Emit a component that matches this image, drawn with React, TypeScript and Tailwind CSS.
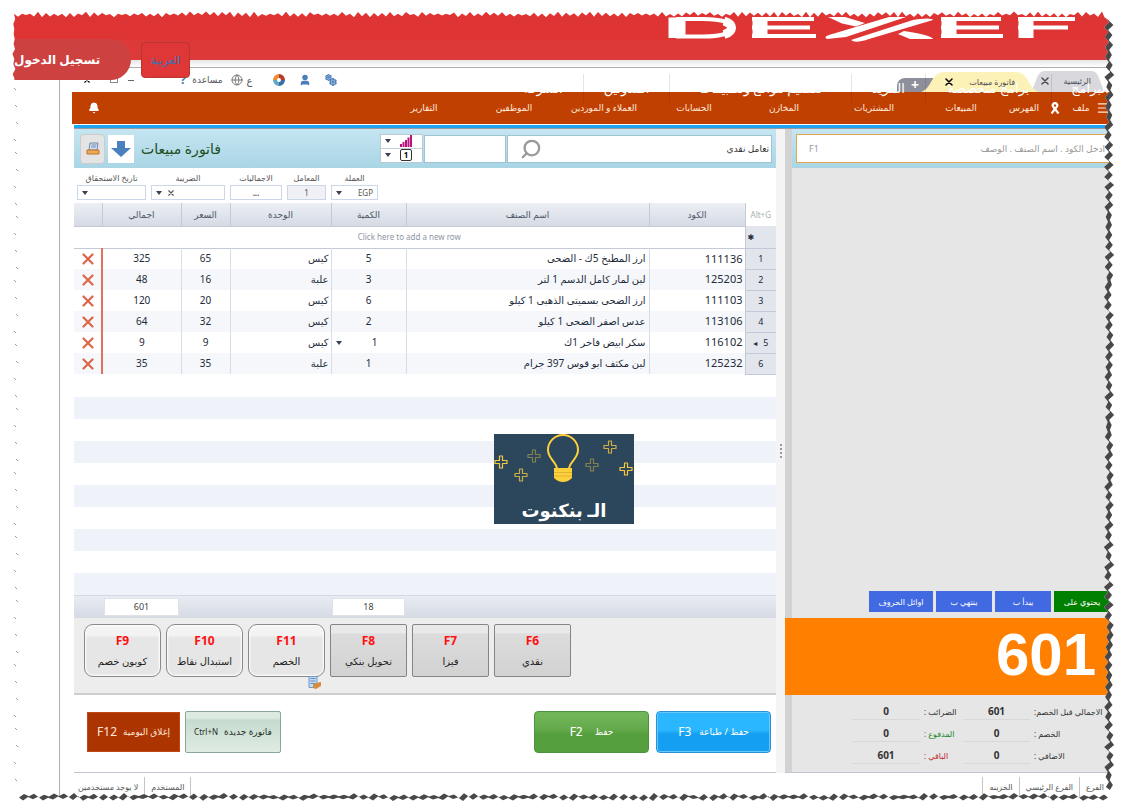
import React from "react";
import { Bell, Menu, Search, Globe, User, Settings } from "lucide-react";

const menu = [
  { label: "المشتريات" },
  { label: "المخازن" },
  { label: "الحسابات" },
  { label: "العملاء و الموردين" },
  { label: "الموظفين" },
  { label: "التقارير" },
];

const items = [
  { code: "111136", name: "ارز المطبخ 5ك - الضحى", qty: 5, unit: "كيس", price: 65, total: 325 },
  { code: "125203", name: "لبن لمار كامل الدسم 1 لتر", qty: 3, unit: "علبة", price: 16, total: 48 },
  { code: "111103", name: "ارز الضحى بسميتى الذهبى 1 كيلو", qty: 6, unit: "كيس", price: 20, total: 120 },
  { code: "113106", name: "عدس اصفر الضحى 1 كيلو", qty: 2, unit: "كيس", price: 32, total: 64 },
  { code: "116102", name: "سكر ابيض فاخر 1ك", qty: 1, unit: "كيس", price: 9, total: 9 },
  { code: "125232", name: "لبن مكثف ابو قوس 397 جرام", qty: 1, unit: "علبة", price: 35, total: 35 },
];

function Caret() {
  return (
    <svg className="h-1 w-1.5 shrink-0" viewBox="0 0 6 4" aria-hidden="true">
      <path d="M0 0h6L3 4z" fill="#374151" />
    </svg>
  );
}

function Cross({ className }: { className: string }) {
  return (
    <svg className={className} viewBox="0 0 12 12" aria-hidden="true">
      <path d="M1.5 1.5l9 9M10.5 1.5l-9 9" stroke="currentColor" strokeWidth="2.2" strokeLinecap="round" />
    </svg>
  );
}

function BrandLogo() {
  return (
    <svg className="h-7 w-[408px]" viewBox="0 0 408 28" role="img" aria-label="DEXEF">
      <g fill="none" stroke="#fff">
        <path d="M10 3.500v20.500" strokeWidth="17" />
        <path d="M9 5H36C76 5 76 22.500 36 22.500H9" strokeWidth="4" />
        <path d="M57 7C67 10 67 17.500 57 20.500" strokeWidth="9" />
        <path d="M93 3v21M282 3v21M359 3v21" strokeWidth="15" />
        <path d="M85 5h62M85 13.500h58M85 22h64" strokeWidth="4" />
        <path d="M274 5h60M274 13.500h58M274 22h62" strokeWidth="4" />
        <path d="M351 5h57M351 13.500h50" strokeWidth="4" />
      </g>
      <g fill="#fff">
        <path d="M161 3h17l20 6-9 3.500-14-3z" />
        <path d="M222 3h17l-60 20-19 2q-4-2 2-4z" />
        <path d="M246 6q18-3 20 0l-64 19q-14 5-18 1z" />
        <path d="M237 17l-6 3 12 5h23q-2-4-29-8z" />
      </g>
    </svg>
  );
}

function Plus({ x, y, o }: { x: number; y: number; o: number }) {
  return (
    <path
      transform={`translate(${x} ${y})`}
      opacity={o}
      d="M-1.500-6h3v4.500h4.500v3h-4.500v4.500h-3v-4.500h-4.500v-3h4.500z"
      fill="none"
      stroke="#f5c842"
      strokeWidth="1.200"
      strokeLinejoin="round"
    />
  );
}

function Promo() {
  return (
    <a href="#banknote" className="absolute top-[59px] left-[420px] flex h-[90px] w-[140px] items-end justify-center bg-[#2c465c]">
      <svg className="absolute inset-0 h-full w-full" viewBox="0 0 140 90" aria-hidden="true">
        <path d="M63 35c0-7-9-10-9-19a15 15 0 0 1 30 0c0 9-9 12-9 19z" fill="none" stroke="#fdd03b" strokeWidth="2" />
        <path d="M60 34h18v10q-4 4-9 4t-9-4z" fill="#fdd03b" />
        <path d="M60 38.500h18M60 42h18" stroke="#d9a92d" strokeWidth=".8" />
        <Plus x={7} y={28} o={1} />
        <Plus x={27} y={41} o={0.8} />
        <Plus x={40} y={22} o={0.45} />
        <Plus x={98} y={31} o={0.45} />
        <Plus x={116} y={13} o={0.8} />
        <Plus x={132} y={35} o={1} />
      </svg>
      <span className="relative text-[18px] leading-7 font-bold text-white">الـ بنكنوت</span>
    </a>
  );
}

type Pt = [number, number];

function edge(count: number, seed: number, at: (i: number, jitter: number) => Pt): Pt[] {
  let s = seed;
  const out: Pt[] = [];
  for (let i = 0; i < count; i++) {
    s = (s * 16807) % 2147483647;
    const r = (s % 1000) / 1000;
    out.push(at(i, (i % 2 ? 1 : -1) * (0.6 + r * 3)));
  }
  return out;
}

const topEdge = edge(273, 77, (i, j) => [14 + i * 4, 14.5 + j * 0.8]);
const rightEdge = edge(155, 913, (i, j) => [1107 + j * 0.9, 17 + i * 5]);
const bottomEdge = edge(218, 4211, (i, j) => [1104 - i * 5, 795.5 + j * 0.7]);
const leftEdge = edge(156, 31, (i, j) => [14 + j * 0.5, 794 - i * 5]);

const line = (p: Pt[]) => p.map(([x, y]) => `${x.toFixed(1)} ${y.toFixed(1)}`).join("L");
const band = (p: Pt[], dx: number, dy: number) =>
  `M${line(p)}L${line([...p].reverse().map(([x, y]) => [x + dx, y + dy] as Pt))}Z`;

function TornFrame() {
  const inner = line([...topEdge, ...rightEdge, ...bottomEdge, ...leftEdge]);
  return (
    <svg
      className="pointer-events-none absolute inset-0 z-30 h-full w-full"
      viewBox="0 0 1123 810"
      preserveAspectRatio="none"
      aria-hidden="true"
    >
      <path d={`M-2-2H1125V812H-2ZM${inner}Z`} fill="#fff" fillRule="evenodd" />
      <path d={band(rightEdge, 4, 3)} fill="#484848" />
      <path d={band(bottomEdge, 4, 3)} fill="#484848" />
      {Array.from({ length: 44 }, (_, i) => (
        <path key={i} d={`M${14 + (i % 3)} ${88 + i * 16 + (i % 4)}l2 2`} stroke="#999" strokeWidth="1" />
      ))}
    </svg>
  );
}

function SiteHeader() {
  return (
    <header className="relative h-[60px] bg-[#df3434]">
      <div className="absolute inset-x-0 bottom-0 h-5 bg-[#dd3939]" />
      <div className="relative flex justify-start pt-3.5 pr-12">
        <BrandLogo />
      </div>
      <button className="absolute top-[42px] left-[141px] z-20 h-9 w-[49px] rounded border border-[#bb3434] bg-[#df3737] text-[11px] text-[#3175b8]">
        العربية
      </button>
      <a
        href="#login"
        className="absolute top-[39px] left-0 z-20 flex h-[41px] w-[131px] items-center justify-end rounded-r-full bg-[#cd4141] pl-3.5 text-[12px] font-semibold whitespace-nowrap text-white"
      >
        تسجيل الدخول
      </a>
      <nav className="absolute top-[74px] right-[13px] z-10 flex h-[29px] text-[13px] leading-[29px] whitespace-nowrap text-white [&>a]:border-l [&>a]:border-black/10 [&>a]:text-center">
        <a href="#programs" className="w-[59px] pl-[18px]">البرامج</a>
        <a href="#special" className="w-[126px]">برامج متخصصة</a>
        <a href="#more" className="w-[74px]">المزيد</a>
        <a href="#design" className="w-[182px]">تصميم مواقع وتطبيقات</a>
        <a href="#blog" className="w-[86px]">المدونين</a>
        <a href="#about" className="w-20 border-none!">الشركة</a>
      </nav>
    </header>
  );
}

function TabShape({ fill }: { fill: string }) {
  return (
    <svg className="absolute inset-0 h-full w-full" viewBox="0 0 100 22" preserveAspectRatio="none" aria-hidden="true">
      <path d="M0 22C10 18 8 1 20 1H80C92 1 90 18 100 22Z" fill={fill} />
    </svg>
  );
}

function TitleBar() {
  return (
    <div className="flex h-6 items-center justify-between pl-3 text-[8px]">
      <div className="flex h-full items-end pr-[3px] text-[#4b4b55]">
        <button className="relative flex h-[22px] w-[78px] items-center justify-between pr-4 pl-3">
          <TabShape fill="#d8d8dd" />
          <span className="relative">الرئيسية</span>
          <Cross className="relative h-2 w-2" />
        </button>
        <button className="relative -mr-2.5 flex h-[21px] w-[118px] items-center justify-between pr-6 pl-6">
          <TabShape fill="#fcf2b8" />
          <span className="relative">فاتورة مبيعات</span>
          <Cross className="relative h-2 w-2 text-black" />
        </button>
        <button aria-label="تبويب جديد" className="-mr-3 flex h-3.5 w-9 items-center justify-center rounded-tl-lg bg-[#8d8f9b] text-[14px] leading-none font-bold text-white">
          +
        </button>
      </div>
      <div className="flex items-center text-[#555]">
        <span className="relative ml-3.5 h-3 w-3 text-[#4a7ebb]">
          <Settings className="absolute top-0 left-0 h-[7px] w-[7px]" strokeWidth={4} />
          <Settings className="absolute right-0 bottom-0 h-2 w-2" strokeWidth={4} />
        </span>
        <User className="ml-3.5 h-3 w-3 fill-[#4a7ebb] text-[#4a7ebb]" strokeWidth={3} />
        <svg className="ml-5 h-3 w-3" viewBox="0 0 12 12" fill="none" strokeWidth="4" aria-hidden="true">
          <path d="M6 2a4 4 0 0 1 4 4" stroke="#b83a2e" />
          <path d="M10 6a4 4 0 0 1-4 4" stroke="#3d6da8" />
          <path d="M6 10a4 4 0 0 1-4-4" stroke="#5fa8c9" />
          <path d="M2 6a4 4 0 0 1 4-4" stroke="#e98e35" />
        </svg>
        <span className="ml-1 text-[10px]">ع</span>
        <Globe className="ml-2 h-3 w-3 text-[#777]" />
        <span className="ml-1.5 text-[9px]">مساعدة</span>
        <span dir="ltr" className="ml-[46px] text-[13px] font-bold text-[#4a7ebb]">?</span>
        <span className="ml-2.5 h-px w-1.5 bg-[#666]" />
        <span className="ml-5 h-1.5 w-2 border border-[#888]" />
        <Cross className="ml-3 h-1.5 w-1.5 text-black" />
      </div>
    </div>
  );
}

function MenuBar() {
  return (
    <div className="ml-3 flex h-8 items-center bg-[#bf4000] text-[9px] text-[#ffe9dc]">
      <button aria-label="القائمة" className="ml-px">
        <Menu className="h-4 w-3.5" />
      </button>
      <button className="w-7">ملف</button>
      <svg className="mr-1.5 ml-1 h-3 w-3 shrink-0" viewBox="0 0 12 12" fill="none" stroke="#fff" strokeWidth="2.200" aria-hidden="true">
        <path d="M2.500 11.500L8 4.500C9 2.500 7.500 1.200 6 1.200S3 2.500 4 4.500l5.500 7" />
      </svg>
      <button className="w-[42px]">الفهرس</button>
      <button className="w-[84px]">المبيعات</button>
      {menu.map((m) => (
        <button key={m.label} className="w-[90px] whitespace-nowrap">
          {m.label}
        </button>
      ))}
      <button aria-label="تنبيهات" className="mr-auto ml-4">
        <Bell className="h-3 w-3 fill-white text-white" />
      </button>
    </div>
  );
}

function InvoiceHeader() {
  return (
    <div className="flex h-[39px] items-center gap-px bg-linear-to-b from-[#c5e5f1] to-[#a9d5e5] pr-1 pl-1.5">
      <div className="flex h-7 min-w-0 flex-1 items-center border border-[#9fc3d3] bg-white pr-0.5 pl-3">
        <input aria-label="العميل" defaultValue="تعامل نقدي" className="w-full min-w-0 bg-transparent text-[9px] text-[#333] outline-none" />
        <Search className="h-6 w-6 -scale-x-100 text-[#999]" strokeWidth={2.5} />
      </div>
      <input aria-label="رقم المستند" className="h-7 w-[82px] border border-[#9fc3d3] bg-white" />
      <div className="flex h-[29px] w-[43px] flex-col border border-[#b9c9d6] bg-white">
        <button aria-label="مستوى السعر" className="flex h-3.5 items-center justify-between border-b border-[#c5cfdc] pr-2.5 pl-1">
          <svg className="h-3 w-3" viewBox="0 0 12 12" aria-hidden="true">
            <path d="M0 9h2v3H0zM2.500 7h2v5h-2zM5 5h2v7H5zM7.500 2.500h2V12h-2zM10 0h2v12h-2z" fill="#b8137f" />
          </svg>
          <Caret />
        </button>
        <button className="flex h-3.5 items-center justify-between pr-2.5 pl-1">
          <span className="flex h-3 w-3 items-center justify-center rounded-xs border border-[#333] text-[8px] leading-none font-bold">1</span>
          <Caret />
        </button>
      </div>
      <h1 className="mr-auto ml-1.5 w-[238px] text-left text-[14px] font-medium whitespace-nowrap text-[#1d4d20]">فاتورة مبيعات</h1>
      <button aria-label="تنزيل" className="ml-0.5 flex h-7 w-[26px] items-center justify-center bg-white">
        <svg className="h-4 w-5" viewBox="0 0 20 16" aria-hidden="true">
          <path d="M6 0h8v7h6L10 16 0 7h6z" fill="#4a80bf" />
        </svg>
      </button>
      <button aria-label="طباعة" className="flex h-[30px] w-[25px] items-center justify-center rounded-sm border border-[#ccc] bg-[#e4e4e4]">
        <svg className="h-3.5 w-3.5" viewBox="0 0 14 14" aria-hidden="true">
          <path d="M4 1h8l-1 7H3z" fill="#d7e4f4" stroke="#6d87ab" />
          <path d="M5.500 3h5M5 5h5" stroke="#6d87ab" />
          <path d="M1 8h12v4H1z" fill="#eda955" stroke="#b9762b" />
        </svg>
      </button>
    </div>
  );
}

function Filters() {
  const box = "flex h-[15px] items-center border border-[#ccd6ea] bg-white px-1";
  return (
    <div className="flex h-[35px] justify-end gap-[5px] pt-[3px] pl-[3px] text-center text-[8px] leading-[14px] whitespace-nowrap text-[#555]">
      <label className="w-[47px]">
        العملة
        <span className={box + " justify-between"}>
          <span>EGP</span>
          <Caret />
        </span>
      </label>
      <label className="w-[39px]">
        المعامل
        <input defaultValue="1" className="block h-[15px] w-full border border-[#ccd6ea] bg-[#f0f1f4] text-center" />
      </label>
      <label className="w-[52px]">
        الاجماليات
        <button className="block h-[15px] w-full border border-[#ccd6ea] bg-white leading-none font-bold">...</button>
      </label>
      <label className="w-[74px]">
        الضريبة
        <span className={box + " justify-end gap-1.5"}>
          <Cross className="h-1.5 w-1.5" />
          <Caret />
        </span>
      </label>
      <label className="w-[69px]">
        تاريخ الاستحقاق
        <span className={box + " justify-end"}>
          <Caret />
        </span>
      </label>
    </div>
  );
}

function ItemsTable() {
  return (
    <table className="w-full table-fixed border-collapse text-[10px] text-[#222b3a]">
      <colgroup>
        <col className="w-[31px]" />
        <col className="w-24" />
        <col />
        <col className="w-[75px]" />
        <col className="w-[101px]" />
        <col className="w-[49px]" />
        <col className="w-[79px]" />
        <col className="w-7" />
      </colgroup>
      <thead>
        <tr className="h-[23px] text-[9px] text-[#4f5868] [&>th]:border-r [&>th]:border-b [&>th]:border-[#c3c9d8] [&>th]:bg-linear-to-b [&>th]:from-[#eceff4] [&>th]:to-[#d5dae4] [&>th]:font-normal">
          <td dir="ltr" className="text-center text-[8px] text-[#a9b0a8]">Alt+G</td>
          <th>الكود</th>
          <th>اسم الصنف</th>
          <th>الكمية</th>
          <th>الوحدة</th>
          <th>السعر</th>
          <th>اجمالي</th>
          <th aria-label="حذف" />
        </tr>
      </thead>
      <tbody>
        <tr className="h-[22px] border-b border-[#c3c9d8]">
          <td className="border-l border-[#c3c9d8] bg-[#e2e5ec] pl-0.5 text-left text-[8px]">✱</td>
          <td colSpan={7} dir="ltr" className="text-center text-[8px] text-[#8f96a3]">
            Click here to add a new row
          </td>
        </tr>
        {items.map((r, i) => (
          <tr key={r.code} className="h-[21px] even:bg-white odd:bg-[#f5f7fa] [&>td]:p-0">
            <td className="border-b border-l border-[#c3c9d8] bg-[#e2e5ec] text-center text-[9px]">
              {i + 1}
              {i === 4 && <span className="mr-1.5 inline-block text-[8px]">◂</span>}
            </td>
            <td className="border-l border-[#d9dce8] text-[11px]">
              <span className="block pr-0.5 text-right">{r.code}</span>
            </td>
            <td className="border-l border-[#d9dce8] whitespace-nowrap">
              <span className="block pr-[3px]">{r.name}</span>
            </td>
            <td className="border-l border-[#d9dce8] text-center">
              {i === 4 ? (
                <span className="flex items-center justify-between pr-7 pl-1">
                  {r.qty}
                  <Caret />
                </span>
              ) : (
                r.qty
              )}
            </td>
            <td className="border-l border-[#d9dce8]">
              <span className="block pr-0.5">{r.unit}</span>
            </td>
            <td className="border-l border-[#d9dce8] text-center">{r.price}</td>
            <td className="border-l-2 border-l-[#e5705a] text-center">{r.total}</td>
            <td className="text-center">
              <button aria-label="حذف الصف" className="block w-full text-[#dd6549]">
                <Cross className="mx-auto h-3 w-3" />
              </button>
            </td>
          </tr>
        ))}
      </tbody>
    </table>
  );
}

const pay = [
  { key: "F6", label: "نقدي", round: false },
  { key: "F7", label: "فيزا", round: false },
  { key: "F8", label: "تحويل بنكي", round: false },
  { key: "F11", label: "الخصم", round: true },
  { key: "F10", label: "استبدال نقاط", round: true },
  { key: "F9", label: "كوبون خصم", round: true },
];

function PaymentPanel() {
  return (
    <div className="flex h-[77px] justify-end gap-[5px] border-b-2 border-[#cfcfcf] bg-[#ededed] pt-1.5 pl-2.5">
      {pay.map((p) => (
        <div key={p.key} className="relative">
          <button
            className={
              "flex h-[53px] w-[77px] flex-col items-center justify-center gap-1 border text-[10px] leading-4 whitespace-nowrap text-[#222] " +
              (p.round
                ? "rounded-[9px] border-[#8a8a8a] bg-linear-to-b from-[#f3f3f3] from-20% to-[#e6e6e6] to-25% shadow-[inset_0_0_2px_1px_#fff]"
                : "rounded-xs border-[#858585] bg-linear-to-b from-[#e9e9e9] from-15% via-[#dcdcdc] via-18% to-[#d2d2d2]")
            }
          >
            <span className="text-[12px] font-bold text-[#ff1010]">{p.key}</span>
            <span>{p.label}</span>
          </button>
          {p.key === "F11" && (
            <svg className="absolute right-1 bottom-1 h-[13px] w-[13px]" viewBox="0 0 13 13" aria-hidden="true">
              <path d="M1 .5h8v11H1z" fill="#c5dbf4" stroke="#6d9ace" />
              <path d="M2.500 2.500h5M2.500 5h5M2.500 7.500h5" stroke="#5f8cc4" />
              <path d="M5 8.500l3-1.500 5-1v4l-5 3-3-1z" fill="#d58c3d" />
            </svg>
          )}
        </div>
      ))}
    </div>
  );
}

function Actions() {
  return (
    <div className="flex h-[77px] items-center gap-[7px] pr-[5px] pb-1 pl-[13px] whitespace-nowrap">
      <button className="flex h-[42px] w-[115px] items-center justify-center gap-2 rounded border border-[#2d8fd8] bg-linear-to-b from-[#2bb7ff] from-45% to-[#149ff2] to-55% text-[9px] text-white shadow-[inset_0_0_0_1px_#68c7ff]">
        <span>حفظ / طباعة</span>
        <span className="text-[12px]">F3</span>
      </button>
      <button className="flex h-[42px] w-[115px] items-center justify-center gap-3 rounded border border-[#4a9340] bg-linear-to-b from-[#70b658] from-10% via-[#63a94b] via-45% to-[#569f3e] to-55% text-[9px] text-white">
        <span>حفظ</span>
        <span className="text-[12px]">F2</span>
      </button>
      <button className="mr-auto -ml-0.5 flex h-[42px] w-24 items-center justify-center gap-1.5 rounded-xs border border-[#8ba596] bg-linear-to-b from-[#dceae1] from-15% via-[#c6dbcf] via-20% to-[#dfebe3] text-[9px] text-[#1f2b25]">
        <span>فاتورة جديدة</span>
        <span className="text-[8px]">Ctrl+N</span>
      </button>
      <button className="flex h-10 w-[93px] items-center justify-center gap-1.5 border border-[#c04a10] bg-[#ab3400] text-[9px] text-[#ffe6d8]">
        <span>إغلاق اليومية</span>
        <span className="text-[12px]">F12</span>
      </button>
    </div>
  );
}

function InvoicePanel() {
  return (
    <main className="flex min-w-0 flex-1 flex-col border-b border-[#c3c6ce] bg-white">
      <InvoiceHeader />
      <Filters />
      <ItemsTable />
      <div className="relative flex min-h-[218px] flex-1 flex-col">
        {Array.from({ length: 10 }, (_, i) => (
          <div key={i} className={i % 2 ? "flex-1 bg-[#eff2f8]" : "flex-1 bg-white"} />
        ))}
        <Promo />
      </div>
      <div className="flex h-[23px] items-center justify-end border-t border-[#d5d9e3] bg-linear-to-b from-[#e9ecf2] to-[#d5dae4] text-center text-[9px] text-[#444]">
        <output className="ml-[153px] h-[18px] w-[73px] border border-[#e0e2e8] bg-white leading-4">18</output>
        <output className="ml-[30px] h-[18px] w-[75px] border border-[#e0e2e8] bg-white leading-4">601</output>
      </div>
      <PaymentPanel />
      <Actions />
    </main>
  );
}

const totals = [
  { a: "الاجمالي قبل الخصم:", av: "601", b: "الضرائب :", bv: "0", color: "text-[#333]" },
  { a: "الخصم :", av: "0", b: "المدفوع :", bv: "0", color: "text-[#218a2b]" },
  { a: "الاضافي :", av: "0", b: "الباقي :", bv: "601", color: "text-[#c1272d]" },
];

function SearchPanel() {
  const tab = "h-[21px] bg-[#4169e1]";
  const shade = "border-l-[7px] border-[#d2d2d4]";
  return (
    <aside className="flex w-[325px] shrink-0 flex-col border-b border-[#c3c6ce] bg-[#e6e6e6]">
      <div className={"flex flex-1 flex-col " + shade}>
        <div className="h-[39px] bg-linear-to-b from-[#c5e5f1] to-[#a9d5e5] pt-[5px] pl-1">
          <div className="flex h-[29px] items-center border border-[#e5a64e] bg-white pr-1 pl-3 text-[9px] text-[#9a9a9a]">
            <input aria-label="بحث" placeholder="ادخل الكود . اسم الصنف . الوصف" className="w-full min-w-0 bg-transparent outline-none placeholder:text-[#999]" />
            <span>F1</span>
          </div>
        </div>
        <div className="mt-auto mb-1.5 flex gap-[3px] text-[8px] whitespace-nowrap text-white">
          <button className="h-[21px] w-14 bg-[#008000]">يحتوي على</button>
          <button className={tab + " w-14"}>يبدأ ب</button>
          <button className={tab + " w-14"}>ينتهي ب</button>
          <button className={tab + " w-16"}>اوائل الحروف</button>
        </div>
      </div>
      <output className="flex h-[77px] items-center bg-[#ff8000] pr-3.5 pb-1 font-['Liberation_Sans',sans-serif] text-[60px] leading-none font-bold text-white">
        601
      </output>
      <dl
        className={
          "grid h-[77px] grid-cols-[80px_67px_43px_68px] content-center items-center gap-y-[5px] text-[8px] leading-4 whitespace-nowrap text-[#333] " +
          shade
        }
      >
        {totals.map((t) => (
          <React.Fragment key={t.a}>
            <dt className="pr-1 pl-1 text-left">{t.a}</dt>
            <dd className="border-b border-[#d8d8d8] text-center text-[10px] font-bold">{t.av}</dd>
            <dt className={"pl-1 text-left " + t.color}>{t.b}</dt>
            <dd className="border-b border-[#d8d8d8] text-center text-[10px] font-bold">{t.bv}</dd>
          </React.Fragment>
        ))}
      </dl>
    </aside>
  );
}

function StatusBar() {
  return (
    <footer className="flex h-[37px] items-start pt-1 pl-3 text-[8px] whitespace-nowrap text-[#555] [&>span]:h-5 [&>span]:border-l [&>span]:border-[#c5c5c5] [&>span]:px-1.5 [&>span]:leading-5">
      <span>الفرع</span>
      <span>الفرع الرئيسي</span>
      <span>الخزينه</span>
      <span className="mr-auto border-r border-l">المستخدم</span>
      <span className="border-none!">لا يوجد مستخدمين</span>
    </footer>
  );
}

export default function App() {
  return (
    <div
      dir="rtl"
      className="relative flex min-h-screen flex-col overflow-hidden bg-white font-['Noto_Sans','DejaVu_Sans',sans-serif]"
    >
      <SiteHeader />
      <div className="h-[7px] shrink-0 bg-linear-to-b from-[#e6e6e6] to-white" />
      <div className="mr-[13px] ml-[59px] flex flex-1 flex-col border-t border-l border-[#adadad]">
        <TitleBar />
        <MenuBar />
        <div className="ml-3.5 h-[5px] border-y border-t-white border-b-[#9a9aa5] bg-[#1ea5f2]" />
        <div className="ml-3.5 flex flex-1">
          <SearchPanel />
          <div className="flex w-[9px] shrink-0 items-center justify-center bg-[#f4f4f4]">
            <span className="h-3.5 border-l-2 border-dotted border-[#999]" />
          </div>
          <InvoicePanel />
        </div>
        <StatusBar />
      </div>
      <TornFrame />
    </div>
  );
}
